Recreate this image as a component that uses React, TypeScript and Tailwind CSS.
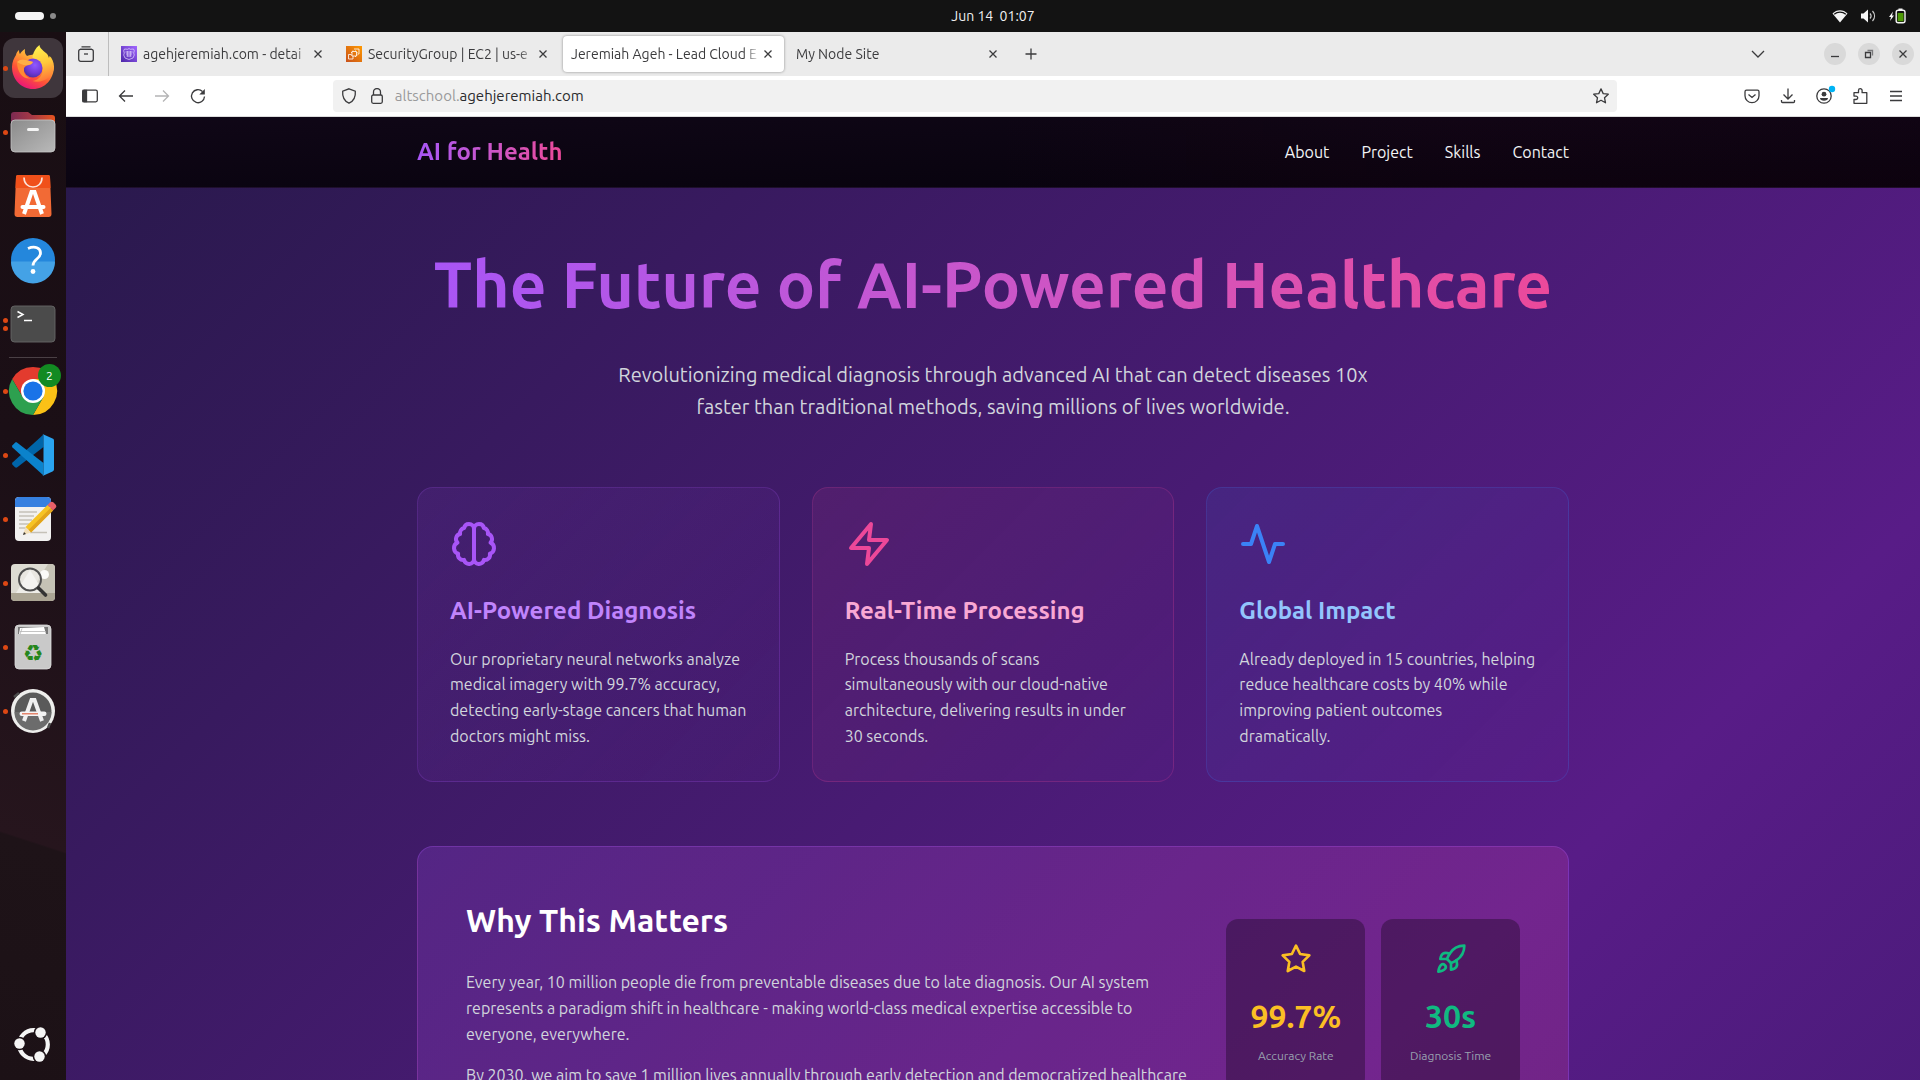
import type { ReactNode } from "react";

/* ---------- Dock icons, each drawn on a 66 × 64 slot ---------- */

const dockIcon = "block h-16 w-full";

function FirefoxIcon() {
  return (
    <svg viewBox="0 0 66 64" className={dockIcon} aria-hidden="true">
      <defs>
        <linearGradient id="ff-body" x1="0.85" y1="0.05" x2="0.3" y2="1">
          <stop offset="0" stopColor="#fff44f" />
          <stop offset="0.35" stopColor="#ffa436" />
          <stop offset="0.65" stopColor="#ff5436" />
          <stop offset="1" stopColor="#e8127c" />
        </linearGradient>
        <linearGradient id="ff-flame" x1="0.4" y1="0" x2="0.6" y2="1">
          <stop offset="0" stopColor="#fff14e" />
          <stop offset="0.5" stopColor="#ffc83a" />
          <stop offset="1" stopColor="#ff7139" />
        </linearGradient>
        <radialGradient id="ff-globe" cx="0.6" cy="0.35" r="0.7">
          <stop offset="0" stopColor="#9059ff" />
          <stop offset="0.6" stopColor="#7038d8" />
          <stop offset="1" stopColor="#4a2f9e" />
        </radialGradient>
      </defs>
      <rect x="3" y="2" width="60" height="60" rx="12" fill="#3f363c" />
      <path d="M12 31c0-5 2-9 4-12 .3-2 1.500-4 3-5 0 2 .5 3.500 1 4 1-2 3-4 5-5-.5 3 0 5 2 7 3-1 5-1.500 8-1.500L54 30c0 13-9 23-21 23S12 43 12 31z" fill="url(#ff-body)" />
      <path d="M39.500 9c-4 3-7 8-7 14 5 1 9 5 10 9 1 6-3 12-10 13 10 3 21-4 21.500-14 0-5-2-9-4.500-11l-.5 2c-1-4-3-5-5.500-7-2-2-4-3.500-4-6z" fill="url(#ff-flame)" />
      <circle cx="33" cy="32" r="9.500" fill="url(#ff-globe)" />
      <path d="M17 26c3-2.500 6-3 9-2 3 .5 5 1.500 7 2-1 2.500-3 3-6 3.500-2 1-3.500 2-3 5 0 4 3 7 7 8-8 1-14-6-14-16.500z" fill="#ff8a33" />
      <path d="M17 26c3-3 6-3 9-2 3 .5 5 1.500 7 2-1 2.500-4 3-7 3.200-3 0-6-1.200-9-3.200z" fill="#ffbd4f" opacity="0.7" />
    </svg>
  );
}

function FilesIcon() {
  return (
    <svg viewBox="0 0 66 64" className={dockIcon} aria-hidden="true">
      <defs>
        <linearGradient id="fl-back" x1="0" y1="0" x2="1" y2="0">
          <stop offset="0" stopColor="#7b2a52" />
          <stop offset="0.5" stopColor="#a83a45" />
          <stop offset="1" stopColor="#e8541f" />
        </linearGradient>
        <linearGradient id="fl-front" x1="0" y1="0" x2="1" y2="1">
          <stop offset="0" stopColor="#8b8b8b" />
          <stop offset="1" stopColor="#b9b9b9" />
        </linearGradient>
      </defs>
      <path d="M11 15a3 3 0 0 1 3-3h14l4 3h20a3 3 0 0 1 3 3v12H11z" fill="url(#fl-back)" />
      <rect x="11" y="20" width="44" height="32" rx="4" fill="url(#fl-front)" stroke="#c6c6c6" strokeWidth="0.8" />
      <rect x="27" y="28" width="12" height="3" rx="1.500" fill="#f5f5f5" />
    </svg>
  );
}

function SoftwareIcon() {
  return (
    <svg viewBox="0 0 66 64" className={dockIcon} aria-hidden="true">
      <path d="M18 11h30a2 2 0 0 1 2 2l1.500 37a3 3 0 0 1-3 3h-31a3 3 0 0 1-3-3L16 13a2 2 0 0 1 2-2z" fill="#f26a35" />
      <path d="M18 11h30a2 2 0 0 1 2 2l.5 11h-35L16 13a2 2 0 0 1 2-2z" fill="#f0501a" />
      <path d="M24 13.500c0 6 4 9.500 9 9.500s9-3.500 9-9.500" fill="none" stroke="#fbe4da" strokeWidth="1.600" />
      <path d="M24 50l7.500-22h3L42 50" fill="none" stroke="#fff" strokeWidth="4" />
      <rect x="20.500" y="41" width="25" height="4" rx="2" fill="#fff" />
    </svg>
  );
}

function HelpIcon() {
  return (
    <svg viewBox="0 0 66 64" className={dockIcon} aria-hidden="true">
      <circle cx="33" cy="32" r="22" fill="#2487dc" />
      <path d="M11 33.500h44a22 22 0 0 1-44 0z" fill="#44a2e6" />
      <path d="M28 20.500c7-3 12.500-.5 12.500 4.500 0 6-7.500 6-7.500 12.500" fill="none" stroke="#fff" strokeWidth="2.800" />
      <circle cx="33" cy="43.500" r="2.400" fill="#fff" />
    </svg>
  );
}

function TerminalIcon() {
  return (
    <svg viewBox="0 0 66 64" className={dockIcon} aria-hidden="true">
      <rect x="11" y="14" width="44" height="36" rx="3.500" fill="#4b4b4b" stroke="#686868" strokeWidth="0.9" />
      <path d="M17.500 19.500l5.500 3-5.500 3M24 28.500h8" fill="none" stroke="#fff" strokeWidth="1.500" />
    </svg>
  );
}

function ChromeIcon() {
  return (
    <svg viewBox="0 0 66 64" className={dockIcon} aria-hidden="true">
      <path d="M33 32L12.200 20a24 24 0 0 1 41.600 0z" fill="#e33b2e" />
      <path d="M33 20h20.800A24 24 0 0 1 33 56l10.400-18z" fill="#fbc116" />
      <path d="M12.200 20L22.600 38 33 32V20z" fill="#e33b2e" />
      <path d="M12.200 20L22.600 38 33 44 43.400 38 33 56A24 24 0 0 1 12.200 20z" fill="#2da04f" />
      <circle cx="33" cy="32" r="12" fill="#fff" />
      <circle cx="33" cy="32" r="9.600" fill="#1a73e8" />
      <circle cx="49.500" cy="16.500" r="11.500" fill="#128a22" />
      <text x="49.500" y="21" textAnchor="middle" fontSize="12" fill="#fff">2</text>
    </svg>
  );
}

function CodeIcon() {
  return (
    <svg viewBox="0 0 66 64" className={dockIcon} aria-hidden="true">
      <path d="M12.500 39.500a1.800 1.800 0 0 0 0 2.300l2.500 2.400c.7.6 1.600.6 2.300.1L43.500 24V11.500z" fill="#0065a9" />
      <path d="M12.500 24.500a1.800 1.800 0 0 1 0-2.300L15 19.800c.7-.6 1.600-.6 2.300-.1L43.500 40v12.500z" fill="#0b83cc" />
      <path d="M42.500 53l10-4.500c1-.4 1.500-1.200 1.500-2.200V17.700c0-1-.5-1.800-1.500-2.200L42.500 11c.6.500 1 1 1 2v38c0 1-.4 1.500-1 2z" fill="#2aa4f0" />
    </svg>
  );
}

function EditorIcon() {
  return (
    <svg viewBox="0 0 66 64" className={dockIcon} aria-hidden="true">
      <rect x="15" y="10" width="36" height="44" rx="4" fill="#f2f1f0" />
      <path d="M19 10h28a4 4 0 0 1 4 4v6H15v-6a4 4 0 0 1 4-4z" fill="#3680e0" />
      <path d="M19 25h18M19 29h15M19 33h13M19 37h10M19 41h8M30 45.500h17" stroke="#c5c1b8" strokeWidth="1.700" />
      <path d="M25.500 40l22-22 5.500 5.500-22 22z" fill="#f6c324" />
      <path d="M28.500 43l22-22 2.500 2.500-22 22z" fill="#e2a41b" />
      <path d="M25.500 40l5.500 5.500-8 2.500z" fill="#f3dfb8" />
      <path d="M24 45l2 2-3 1z" fill="#333" />
      <path d="M47.500 18l2.500-2.500c1-1 2.500-1 3.500 0l2 2c1 1 1 2.500 0 3.500L53 23.500z" fill="#e8606a" />
    </svg>
  );
}

function ViewerIcon() {
  return (
    <svg viewBox="0 0 66 64" className={dockIcon} aria-hidden="true">
      <rect x="11" y="13" width="44" height="37" rx="4" fill="#dddbd2" />
      <path d="M30 42l18-29h3a4 4 0 0 1 4 4v25z" fill="#c5c2b5" />
      <path d="M16 42l14-23 14 23z" fill="#eeede8" />
      <path d="M11 42h44v4a4 4 0 0 1-4 4H15a4 4 0 0 1-4-4z" fill="#aba594" />
      <circle cx="44.500" cy="23.500" r="4.500" fill="#fbfbf8" />
      <circle cx="30" cy="28.500" r="11" fill="#ffffff" fillOpacity="0.35" stroke="#4f4f4f" strokeWidth="1.900" />
      <path d="M38.500 37l7 7" stroke="#333" strokeWidth="3.600" strokeLinecap="round" />
    </svg>
  );
}

function TrashIcon() {
  return (
    <svg viewBox="0 0 66 64" className={dockIcon} aria-hidden="true">
      <rect x="15" y="10" width="36" height="44" rx="4" fill="#c9c9c9" stroke="#dedede" strokeWidth="0.8" />
      <path d="M18 12h30v7H18z" fill="#777" />
      <path d="M20 13l24-1 2 7H19z" fill="#fff" />
      <path d="M20 16.500h26M22 13.500l-2 6" stroke="#b5b5b5" strokeWidth="0.8" />
      <text x="33" y="46" textAnchor="middle" fontSize="23" fontFamily="DejaVu Sans" fill="#25861c">♻</text>
    </svg>
  );
}

function UpdaterIcon() {
  return (
    <svg viewBox="0 0 66 64" className={dockIcon} aria-hidden="true">
      <circle cx="33" cy="32" r="22" fill="#eeeeec" />
      <circle cx="33" cy="32" r="18.500" fill="#5a5a5a" />
      <path d="M14.500 33a18.500 18.500 0 0 0 37 0z" fill="#6c6c6c" />
      <path d="M14 18l5-4M50 44l-2 5" stroke="#4c4c4c" strokeWidth="2.500" />
      <path d="M24 42l7.500-21h3L42 42" fill="none" stroke="#f0f0f0" strokeWidth="4" />
      <rect x="19.500" y="32.500" width="27" height="4.500" rx="2.200" fill="#f4f4f4" />
      <path d="M22 34.800h16" stroke="#e0694a" strokeWidth="1.200" />
    </svg>
  );
}

function UbuntuIcon() {
  return (
    <svg viewBox="0 0 66 64" className={dockIcon} aria-hidden="true">
      <circle cx="33.500" cy="32.500" r="14.300" fill="none" stroke="#f5f5f5" strokeWidth="4.200" />
      <circle cx="19.500" cy="31.500" r="6.800" fill="#1d1217" />
      <circle cx="40.500" cy="20.500" r="6.800" fill="#1d1217" />
      <circle cx="39.500" cy="44.500" r="6.800" fill="#1d1217" />
      <circle cx="19.500" cy="31.500" r="5.200" fill="#f5f5f5" />
      <circle cx="40.500" cy="20.500" r="5.200" fill="#f5f5f5" />
      <circle cx="39.500" cy="44.500" r="5.200" fill="#f5f5f5" />
    </svg>
  );
}

function DockItem({ label, dots = 1, children }: { label: string; dots?: number; children: ReactNode }) {
  return (
    <button type="button" aria-label={label} className="relative block h-16 w-full">
      {children}
      <span className="absolute inset-y-0 left-[3px] flex flex-col justify-center gap-[3px]">
        {Array.from({ length: dots }, (_, i) => (
          <span key={i} className="size-[5px] rounded-full bg-[#dd4814]" />
        ))}
      </span>
    </button>
  );
}

function Dock() {
  return (
    <nav
      aria-label="Dock"
      className="flex w-[66px] shrink-0 flex-col bg-[linear-gradient(198deg,#190e13_0px,#1b0f16_400px,#26151d_780px,#1e1318_782px,#1c1116_1017px)] pt-1 pb-1"
    >
      <DockItem label="Firefox"><FirefoxIcon /></DockItem>
      <DockItem label="Files"><FilesIcon /></DockItem>
      <DockItem label="App Center" dots={0}><SoftwareIcon /></DockItem>
      <DockItem label="Help" dots={0}><HelpIcon /></DockItem>
      <DockItem label="Terminal" dots={2}><TerminalIcon /></DockItem>
      <div className="mx-[9px] my-px h-px shrink-0 bg-[#4a4045]" />
      <DockItem label="Google Chrome"><ChromeIcon /></DockItem>
      <DockItem label="Visual Studio Code"><CodeIcon /></DockItem>
      <DockItem label="Text Editor"><EditorIcon /></DockItem>
      <DockItem label="Image Viewer"><ViewerIcon /></DockItem>
      <DockItem label="Trash"><TrashIcon /></DockItem>
      <DockItem label="Software Updater"><UpdaterIcon /></DockItem>
      <div className="flex-1" />
      <DockItem label="Show Apps" dots={0}><UbuntuIcon /></DockItem>
    </nav>
  );
}

/* ---------- System bar ---------- */

function SystemBar() {
  return (
    <header className="flex h-8 shrink-0 items-center bg-[#131313] text-[#f2f2f2]">
      <button type="button" aria-label="Workspaces" className="flex w-[66px] items-center gap-[6px] pl-[15px]">
        <span className="h-2 w-[29px] rounded-full bg-[#f5f5f5]" />
        <span className="size-[6px] rounded-full bg-[#8a8a8a]" />
      </button>
      <div className="grid flex-1 grid-cols-[1fr_auto_1fr] items-center">
        <time className="col-start-2 text-sm leading-5 whitespace-pre">Jun 14  01:07</time>
        <div className="flex items-center justify-end gap-3 pr-[14px]">
          <svg viewBox="0 0 16 16" className="size-4" aria-label="Wi-Fi">
            <path d="M8 14.500L.5 5.500C4.500 1 11.500 1 15.500 5.500z" fill="#f5f5f5" />
            <path d="M2.200 6.300C5.500 3.300 10.500 3.300 13.800 6.300" fill="none" stroke="#131313" strokeWidth="1.200" />
          </svg>
          <svg viewBox="0 0 16 16" className="size-4" aria-label="Volume">
            <path d="M1 5.500h2.500L8 1.500v13l-4.500-4H1z" fill="#f5f5f5" />
            <path d="M10 5.500c1.300 1.500 1.300 3.500 0 5M12.500 3c2.700 3 2.700 7 0 10" fill="none" stroke="#cfcfcf" strokeWidth="1.200" />
          </svg>
          <svg viewBox="0 0 18 16" className="h-4 w-[18px]" aria-label="Battery charging">
            <path d="M5 3.500L1 9h2l-1 4 4-5.500H4z" fill="#f5f5f5" />
            <path d="M10.500.5h4v1.500h-4z" fill="#f5f5f5" />
            <rect x="8.200" y="2.200" width="8.800" height="12.600" rx="2" fill="none" stroke="#f5f5f5" strokeWidth="1.400" />
            <rect x="9.700" y="5" width="5.800" height="8.300" fill="#4e9a06" />
          </svg>
        </div>
      </div>
    </header>
  );
}

/* ---------- Browser chrome ---------- */

const line = "size-4 fill-none stroke-current stroke-[1.3]";

function CloseMark() {
  return (
    <svg viewBox="0 0 16 16" className={line} aria-hidden="true">
      <path d="M4.500 4.500l7 7M11.500 4.500l-7 7" />
    </svg>
  );
}

function AwsDomainIcon() {
  return (
    <svg viewBox="0 0 16 16" className="size-4 shrink-0" aria-hidden="true">
      <defs>
        <linearGradient id="aws-purple" x1="0" y1="1" x2="1" y2="0">
          <stop offset="0" stopColor="#4d27a8" />
          <stop offset="1" stopColor="#a166ff" />
        </linearGradient>
      </defs>
      <path d="M0 0h16v16H0z" fill="url(#aws-purple)" />
      <path d="M8 2.500l1.200.8L12.500 3l.8 1.800-.6 2.200.6 2L12 12l-4 1.500L4 12 2.700 9l.6-2-.6-2.200L3.500 3l3.300.3z" fill="none" stroke="#e6d9ff" strokeWidth="0.7" />
      <path d="M4.500 6h7M5 8h6M5.500 10h5" stroke="#e6d9ff" strokeWidth="0.8" />
      <path d="M6.500 5v5.500M9.500 5v5.500" stroke="#e6d9ff" strokeWidth="0.5" />
    </svg>
  );
}

function AwsComputeIcon() {
  return (
    <svg viewBox="0 0 16 16" className="size-4 shrink-0" aria-hidden="true">
      <defs>
        <linearGradient id="aws-orange" x1="0" y1="1" x2="1" y2="0">
          <stop offset="0" stopColor="#c8511b" />
          <stop offset="1" stopColor="#f90" />
        </linearGradient>
      </defs>
      <path d="M0 0h16v16H0z" fill="url(#aws-orange)" />
      <path d="M6 5.500h4.500V10H6zM7 4.500v1M9.500 4.500v1M10.500 6.500h1M10.500 9h1M7 10v1M9.500 10v1M5 6.500h1M5 9h1M8 3h5v5h-1.500M2.500 8.500V13H7v-2M2.500 8.500H5" fill="none" stroke="#fff" strokeWidth="0.8" />
    </svg>
  );
}

function Tab({ title, icon, active = false }: { title: string; icon?: ReactNode; active?: boolean }) {
  return (
    <div
      role="tab"
      aria-selected={active}
      className={`flex h-9 w-[221px] items-center gap-[6px] rounded-[4px] px-2 ${active ? "bg-white shadow-[0_0_3px_rgba(0,0,0,0.4)]" : ""}`}
    >
      {icon}
      <span className="min-w-0 flex-1 overflow-hidden [mask-image:linear-gradient(to_left,transparent,black_16px)] text-sm leading-5 whitespace-nowrap">
        {title}
      </span>
      <button type="button" aria-label={`Close ${title}`} className="-ml-[6px]">
        <CloseMark />
      </button>
    </div>
  );
}

function TabStrip() {
  return (
    <div className="flex h-11 shrink-0 items-center bg-[#ebebeb] text-[#3b3b3d]">
      <button type="button" aria-label="Recent browsing" className="flex h-11 w-[43px] items-center justify-center border-r border-[#bdbdbd] pr-[2px]">
        <svg viewBox="0 0 16 16" className={line} aria-hidden="true">
          <path d="M3.500.8h9M2 3.400h12" />
          <rect x="0.700" y="3.400" width="14.600" height="11.900" rx="2" />
          <path d="M6 8h4" />
        </svg>
      </button>
      <div role="tablist" className="flex items-center gap-1 pl-1">
        <Tab title="agehjeremiah.com - detai" icon={<AwsDomainIcon />} />
        <Tab title="SecurityGroup | EC2 | us-e" icon={<AwsComputeIcon />} />
        <Tab title="Jeremiah Ageh - Lead Cloud E" active />
        <Tab title="My Node Site" />
      </div>
      <button type="button" aria-label="New tab" className="ml-[14px]">
        <svg viewBox="0 0 16 16" className={line} aria-hidden="true">
          <path d="M8 2.500v11M2.500 8h11" />
        </svg>
      </button>
      <div className="flex-1" />
      <button type="button" aria-label="List all tabs" className="mr-[58px]">
        <svg viewBox="0 0 16 16" className={line} aria-hidden="true">
          <path d="M2 5l6 6 6-6" />
        </svg>
      </button>
      <div className="flex gap-3 pr-[6px]">
        <button type="button" aria-label="Minimize" className="flex size-[22px] items-center justify-center rounded-full bg-[#d9d9d9]">
          <svg viewBox="0 0 16 16" className={line} aria-hidden="true"><path d="M4 10.500h8" /></svg>
        </button>
        <button type="button" aria-label="Restore" className="flex size-[22px] items-center justify-center rounded-full bg-[#d9d9d9]">
          <svg viewBox="0 0 16 16" className={line} aria-hidden="true">
            <path d="M4.500 6.500h5v5h-5z" />
            <path d="M6.500 4.500h5v5" opacity="0.6" />
          </svg>
        </button>
        <button type="button" aria-label="Close window" className="flex size-[22px] items-center justify-center rounded-full bg-[#d9d9d9]">
          <CloseMark />
        </button>
      </div>
    </div>
  );
}

function ToolButton({ label, faded = false, children }: { label: string; faded?: boolean; children: ReactNode }) {
  return (
    <button type="button" aria-label={label} className={`flex h-8 w-9 items-center justify-center ${faded ? "text-[#b4b4b5]" : ""}`}>
      <svg viewBox="0 0 16 16" className={`${line} overflow-visible`} aria-hidden="true">{children}</svg>
    </button>
  );
}

function Toolbar() {
  return (
    <div className="flex h-[41px] shrink-0 items-center border-b border-[#dcdcdc] bg-white px-[6px] text-[#3b3b3d]">
      <ToolButton label="Sidebar">
        <rect x="0.700" y="2.200" width="14.600" height="11.600" rx="1.500" />
        <path d="M1 2.500h3.500v11H1z" fill="currentColor" />
      </ToolButton>
      <ToolButton label="Back"><path d="M15 8H1.500M7 2.500L1.500 8 7 13.500" /></ToolButton>
      <ToolButton label="Forward" faded><path d="M1 8h13.500M9 2.500L14.500 8 9 13.500" /></ToolButton>
      <ToolButton label="Reload">
        <path d="M14.500 8.500A6.500 6.500 0 1 1 12.500 3.500" />
        <path d="M14.800 1v5.500H9.300z" fill="currentColor" stroke="none" />
      </ToolButton>
      <div className="flex-1" />
      <div className="flex h-8 flex-[11] items-center rounded-[4px] bg-[#f1f1f1] text-[15px] leading-5">
        <svg viewBox="0 0 16 16" className={`${line} ml-2`} aria-hidden="true">
          <path d="M8 .8l6.300 2.400c.5 5.500-2 10-6.300 12-4.300-2-6.800-6.500-6.300-12z" />
        </svg>
        <svg viewBox="0 0 16 16" className={`${line} ml-3`} aria-hidden="true">
          <rect x="2.700" y="7" width="10.600" height="8.300" rx="1.500" />
          <path d="M4.500 7V4a3.500 3.500 0 0 1 7 0v3" />
        </svg>
        <a href="#top" className="ml-[10px] flex-1 text-[#2b2b2d]">
          <span className="text-[#9a9a9b]">altschool.</span>agehjeremiah.com
        </a>
        <button type="button" aria-label="Bookmark" className="mr-2">
          <svg viewBox="0 0 16 16" className={line} aria-hidden="true">
            <path d="M8 .9l2.200 4.700 5.100.6-3.800 3.500 1 5.100L8 12.300l-4.500 2.500 1-5.100L.7 6.200l5.100-.6z" strokeLinejoin="round" />
          </svg>
        </button>
      </div>
      <div className="flex-1" />
      <ToolButton label="Save to Pocket">
        <path d="M2.500 2.200h11a1.500 1.500 0 0 1 1.500 1.500v4a7 7 0 0 1-14 0v-4a1.500 1.500 0 0 1 1.500-1.500zM4.500 6.500L8 9.500l3.500-3" />
      </ToolButton>
      <ToolButton label="Downloads">
        <path d="M8 .5v10M3.500 6.500L8 11l4.500-4.500M1.500 12v1.500a1 1 0 0 0 1 1h11a1 1 0 0 0 1-1V12" />
      </ToolButton>
      <ToolButton label="Account">
        <circle cx="8" cy="8" r="7.200" />
        <circle cx="8" cy="6.200" r="2.400" fill="currentColor" stroke="none" />
        <path d="M4 10h8c0 1.800-1.600 2.800-4 2.800S4 11.800 4 10z" fill="currentColor" stroke="none" />
        <circle cx="16" cy="1" r="3.200" fill="#00b3f4" stroke="none" />
      </ToolButton>
      <ToolButton label="Extensions">
        <path d="M2 15.300V11.500H4a1.700 1.700 0 0 0 0-3.400H2V4.700h4.500V2.500a1.800 1.800 0 0 1 3.600 0v2.200h4.700v10.600z" strokeLinejoin="round" />
      </ToolButton>
      <ToolButton label="Menu"><path d="M2 3.500h12M2 8h12M2 12.500h12" /></ToolButton>
    </div>
  );
}

/* ---------- Web page ---------- */

const glyph = "fill-none stroke-current stroke-2";

const features = [
  {
    title: "AI-Powered Diagnosis",
    text: "Our proprietary neural networks analyze medical imagery with 99.7% accuracy, detecting early-stage cancers that human doctors might miss.",
    box: "border-[#a855f7]/20 bg-[linear-gradient(135deg,rgba(168,85,247,0.1),rgba(168,85,247,0.02))]",
    iconColor: "text-[#a855f7]",
    titleColor: "text-[#c084fc]",
    icon: (
      <>
        <path d="M9.500 2A2.500 2.500 0 0 1 12 4.500v15a2.500 2.500 0 0 1-4.960.44 2.500 2.500 0 0 1-2.960-3.080 3 3 0 0 1-.34-5.580 2.500 2.500 0 0 1 1.320-4.240 2.500 2.500 0 0 1 1.980-3A2.500 2.500 0 0 1 9.500 2Z" />
        <path d="M14.500 2A2.500 2.500 0 0 0 12 4.500v15a2.500 2.500 0 0 0 4.960.44 2.500 2.500 0 0 0 2.960-3.080 3 3 0 0 0 .34-5.580 2.500 2.500 0 0 0-1.320-4.240 2.500 2.500 0 0 0-1.980-3A2.500 2.500 0 0 0 14.500 2Z" />
      </>
    ),
  },
  {
    title: "Real-Time Processing",
    text: "Process thousands of scans simultaneously with our cloud-native architecture, delivering results in under 30 seconds.",
    box: "border-[#ec4899]/20 bg-[linear-gradient(135deg,rgba(236,72,153,0.1),rgba(168,85,247,0.02))]",
    iconColor: "text-[#ec4899]",
    titleColor: "text-[#f9a8d4]",
    icon: <polygon points="13 2 3 14 12 14 11 22 21 10 12 10 13 2" />,
  },
  {
    title: "Global Impact",
    text: "Already deployed in 15 countries, helping reduce healthcare costs by 40% while improving patient outcomes dramatically.",
    box: "border-[#3b82f6]/20 bg-[linear-gradient(135deg,rgba(59,130,246,0.1),rgba(168,85,247,0.02))]",
    iconColor: "text-[#3b82f6]",
    titleColor: "text-[#93c5fd]",
    icon: <polyline points="22 12 18 12 15 21 9 3 6 12 2 12" />,
  },
];

const stats = [
  {
    value: "99.7%",
    label: "Accuracy Rate",
    color: "text-[#fbbf24]",
    icon: <polygon points="12 2 15.090 8.260 22 9.270 17 14.140 18.180 21.020 12 17.770 5.820 21.020 7 14.140 2 9.270 8.910 8.260 12 2" />,
  },
  {
    value: "30s",
    label: "Diagnosis Time",
    color: "text-[#10b981]",
    icon: (
      <>
        <path d="M4.500 16.500c-1.500 1.260-2 5-2 5s3.740-.5 5-2c.71-.84.7-2.130-.09-2.910a2.180 2.180 0 0 0-2.910-.09z" />
        <path d="m12 15-3-3a22 22 0 0 1 2-3.950A12.880 12.880 0 0 1 22 2c0 2.720-.78 7.500-6 11a22.350 22.350 0 0 1-4 2z" />
        <path d="M9 12H4s.55-3.030 2-4c1.620-1.080 5 0 5 0" />
        <path d="M12 15v5s3.030-.55 4-2c1.080-1.620 0-5 0-5" />
      </>
    ),
  },
];

function WebPage() {
  return (
    <div
      id="top"
      className="min-h-0 flex-1 overflow-hidden bg-[linear-gradient(135deg,#28194b_0px,#581c87_1590px,#2a1a5a_3180px)] text-white"
    >
      <header className="border-b border-[#a855f7]/10 bg-[linear-gradient(to_right,transparent_50%,rgba(90,0,40,0.07)_75%),linear-gradient(178deg,#100717,#06020c)]">
        <div className="mx-auto flex h-[70px] max-w-[1152px] items-center justify-between">
          <a href="#top" className="bg-linear-to-r from-[#a855f7] to-[#ec4899] bg-clip-text text-2xl font-semibold text-transparent">
            AI for Health
          </a>
          <nav aria-label="Sections" className="flex gap-8 text-base text-[#f3f4f6]">
            <a href="#about">About</a>
            <a href="#project">Project</a>
            <a href="#skills">Skills</a>
            <a href="#contact">Contact</a>
          </nav>
        </div>
      </header>

      <main className="mx-auto max-w-[1152px] pt-[45px]">
        <h1 className="bg-linear-to-r from-[#a855f7] to-[#ec4899] bg-clip-text text-center text-[64px] leading-[1.6] font-bold text-transparent">
          The Future of AI-Powered Healthcare
        </h1>
        <p className="mx-auto mt-6 max-w-[800px] text-center text-xl leading-8 text-gray-300">
          Revolutionizing medical diagnosis through advanced AI that can detect diseases 10x faster than traditional methods, saving millions of lives worldwide.
        </p>

        <section id="about" className="mt-16 grid grid-cols-3 gap-8">
          {features.map((f) => (
            <article key={f.title} className={`rounded-2xl border p-8 ${f.box}`}>
              <svg viewBox="0 0 24 24" className={`size-12 ${glyph} ${f.iconColor}`} strokeLinecap="round" strokeLinejoin="round" aria-hidden="true">
                {f.icon}
              </svg>
              <h3 className={`mt-6 text-2xl leading-[1.6] font-semibold ${f.titleColor}`}>{f.title}</h3>
              <p className="mt-4 text-base leading-[1.6] text-gray-300">{f.text}</p>
            </article>
          ))}
        </section>

        <section
          id="project"
          className="mt-16 flex items-start gap-8 rounded-2xl border border-[#a855f7]/30 bg-[linear-gradient(135deg,rgba(168,85,247,0.2),rgba(236,72,153,0.2))] p-12"
        >
          <div className="flex-1">
            <h2 className="text-[32px] leading-[1.6] font-semibold">Why This Matters</h2>
            <p className="mt-6 text-base leading-[1.6] text-gray-300">
              Every year, 10 million people die from preventable diseases due to late diagnosis. Our AI system represents a paradigm shift in healthcare - making world-class medical expertise accessible to everyone, everywhere.
            </p>
            <p className="mt-4 text-base leading-[1.6] text-gray-300">
              By 2030, we aim to save 1 million lives annually through early detection and democratized healthcare
            </p>
          </div>
          <dl className="mt-6 grid grid-cols-2 gap-4">
            {stats.map((s) => (
              <div key={s.label} className="flex flex-col items-center rounded-xl bg-black/30 p-6">
                <svg viewBox="0 0 24 24" className={`size-8 ${glyph} ${s.color}`} strokeLinecap="round" strokeLinejoin="round" aria-hidden="true">
                  {s.icon}
                </svg>
                <dd className={`mt-4 text-[32px] leading-[1.6] font-bold ${s.color}`}>{s.value}</dd>
                <dt className="mt-1 text-xs leading-5 text-gray-400">{s.label}</dt>
              </div>
            ))}
          </dl>
        </section>
      </main>
    </div>
  );
}

export default function App() {
  return (
    <div className="flex h-screen flex-col overflow-hidden font-['Ubuntu','Noto_Sans',sans-serif]">
      <SystemBar />
      <div className="flex min-h-0 flex-1">
        <Dock />
        <div className="flex min-w-0 flex-1 flex-col">
          <TabStrip />
          <Toolbar />
          <WebPage />
        </div>
      </div>
    </div>
  );
}
